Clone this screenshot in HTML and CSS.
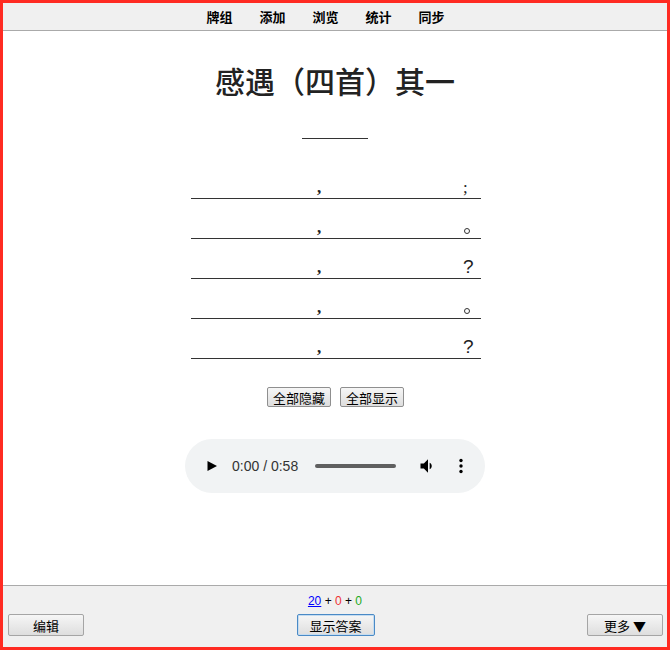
FILE: index.html
```html
<!DOCTYPE html>
<html lang="zh">
  <head>
    <meta charset="UTF-8" />
    <title>感遇</title>
    <link rel="stylesheet" href="styles.css">
  </head>
  <body>
    <div class="window">
      <div class="top-bar">
        <a class="menu-item">牌组</a>
        <a class="menu-item">添加</a>
        <a class="menu-item">浏览</a>
        <a class="menu-item">统计</a>
        <a class="menu-item">同步</a>
      </div>

      <div class="card">
        <h1 class="title">感遇（四首）其一</h1>
        <div class="author-blank"></div>

        <div class="poem">
          <div class="line"><span></span><span class="mid">,</span><span></span><span class="end">;</span></div>
          <div class="line"><span></span><span class="mid">,</span><span></span><span class="end dot"></span></div>
          <div class="line"><span></span><span class="mid">,</span><span></span><span class="end q">?</span></div>
          <div class="line"><span></span><span class="mid">,</span><span></span><span class="end dot"></span></div>
          <div class="line"><span></span><span class="mid">,</span><span></span><span class="end q">?</span></div>
        </div>

        <div class="toggle-buttons">
          <button class="btn small">全部隐藏</button>
          <button class="btn small">全部显示</button>
        </div>

        <div class="player">
          <svg class="play" width="12" height="12" viewBox="0 0 12 12"><path d="M1.5 1 L11 6 L1.5 11 Z" fill="#000"/></svg>
          <span class="time">0:00 / 0:58</span>
          <span class="track"></span>
          <svg class="volume" width="20" height="20" viewBox="0 0 24 24"><path d="M3 9v6h4l5 5V4L7 9H3zm13.5 3c0-1.770-1.02-3.29-2.5-4.03v8.05c1.48-.73 2.5-2.25 2.5-4.02z" fill="#000"/></svg>
          <svg class="more" width="6" height="16" viewBox="0 0 6 16"><circle cx="3" cy="2.5" r="1.7"/><circle cx="3" cy="8" r="1.7"/><circle cx="3" cy="13.5" r="1.7"/></svg>
        </div>
      </div>

      <div class="bottom-bar">
        <div class="counts">
          <a class="new">20</a> + <span class="learn">0</span> + <span class="review">0</span>
        </div>
        <div class="bottom-row">
          <button class="btn wide">编辑</button>
          <button class="btn wide focus">显示答案</button>
          <button class="btn wide">更多 ▼</button>
        </div>
      </div>
    </div>
  </body>
</html>
```

FILE: styles.css
```css
/* Page */
html, body {
  margin: 0;
  height: 100%;
}

body {
  font-family: "Noto Sans CJK SC", "Liberation Sans", sans-serif;
  font-size: 13px;
  color: #000;
}

.window {
  box-sizing: border-box;
  height: 650px;
  border: 3px solid #ff2b22;
  display: flex;
  flex-direction: column;
}

/* Top menu */
.top-bar {
  height: 27px;
  background: #f0f0f0;
  border-bottom: 1px solid #aaa;
  display: flex;
  justify-content: center;
  align-items: center;
  gap: 27px;
  padding-right: 19px;
}

.menu-item {
  font-weight: bold;
  font-size: 13px;
  line-height: 16px;
  color: #000;
}

/* Card */
.card {
  flex: 1;
  background: white;
  display: flex;
  flex-direction: column;
  align-items: center;
}

.title {
  margin: 29px 0 0;
  font-size: 30px;
  line-height: 40px;
  font-weight: 500;
  color: #222;
}

.author-blank {
  width: 66px;
  height: 0;
  margin-top: 38px;
  border-bottom: 1px solid #333;
}

/* Poem blanks */
.poem {
  margin-top: 20px;
  margin-left: 2px;
  width: 290px;
}

.line {
  display: grid;
  grid-template-columns: 126px 14px 1fr 18px;
  height: 39px;
  border-bottom: 1px solid #333;
  align-items: end;
  font-family: "Liberation Serif", serif;
  font-size: 17px;
  line-height: 20px;
  color: #222;
}

.line .mid {
  font-weight: bold;
}

.line .end.dot {
  align-self: end;
  width: 4px;
  height: 4px;
  margin: 0 0 4px 1px;
  border: 1px solid #333;
  border-radius: 50%;
}

.line .end.q {
  font-family: "Liberation Sans", sans-serif;
  font-size: 19px;
  line-height: 23px;
}

/* Buttons */
.btn {
  font-family: "Noto Sans CJK SC", "Liberation Sans", sans-serif;
  font-size: 13px;
  color: #000;
  background: linear-gradient(#f6f6f6, #dedede);
  border: 1px solid #a5a5a5;
  border-radius: 2px;
  padding: 0;
  cursor: pointer;
}

.toggle-buttons {
  margin-top: 28px;
  margin-left: 1px;
  display: flex;
  gap: 9px;
}

.btn.small {
  width: 64px;
  height: 20px;
  line-height: 17px;
  border-color: #8f8f8f;
}

/* Audio player */
.player {
  margin-top: 32px;
  width: 300px;
  height: 54px;
  box-sizing: border-box;
  border-radius: 27px;
  background: #f1f3f4;
  display: flex;
  align-items: center;
  padding-left: 20px;
}

.play {
  margin-left: 1px;
}

.time {
  margin-left: 14px;
  font-family: "Liberation Sans", sans-serif;
  font-size: 14px;
  color: #333;
}

.track {
  margin-left: 17px;
  width: 81px;
  height: 4px;
  border-radius: 2px;
  background: #5f5f5f;
}

.volume {
  margin-left: 22px;
}

.more {
  margin-left: 20px;
}

/* Bottom bar */
.bottom-bar {
  height: 61px;
  background: #f0f0f0;
  border-top: 1px solid #aaa;
  display: flex;
  flex-direction: column;
  align-items: center;
}

.counts {
  margin-top: 7px;
  font-family: "Liberation Sans", sans-serif;
  font-size: 12px;
  line-height: 16px;
}

.counts .new {
  color: #00f;
  text-decoration: underline;
}

.counts .learn {
  color: #e33;
}

.counts .review {
  color: #2a2;
}

.bottom-row {
  align-self: stretch;
  margin-top: 5px;
  padding: 0 4px 0 5px;
  display: flex;
  justify-content: space-between;
}

.btn.wide {
  width: 76px;
  height: 22px;
  line-height: 19px;
}

.btn.focus {
  width: 78px;
  border-color: #4a8ac6;
  box-shadow: inset 0 0 0 1px #c5dcf0;
}
```
